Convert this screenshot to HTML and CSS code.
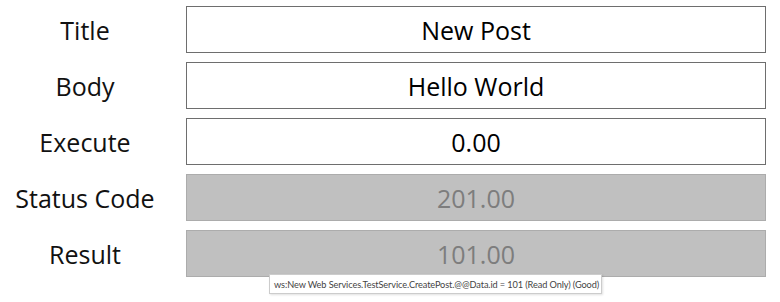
FILE: index.html
```html
<!DOCTYPE html>
<html lang="en">
<head>
  <meta charset="UTF-8">
  <title>Create Post</title>
  <link rel="stylesheet" href="styles.css">
</head>
<body>

  <div class="panel">
    <div class="row">
      <label class="row-label">Title</label>
      <div class="field">New Post</div>
    </div>

    <div class="row">
      <label class="row-label">Body</label>
      <div class="field">Hello World</div>
    </div>

    <div class="row">
      <label class="row-label">Execute</label>
      <div class="field">0.00</div>
    </div>

    <div class="row">
      <label class="row-label">Status Code</label>
      <div class="field readonly">201.00</div>
    </div>

    <div class="row">
      <label class="row-label">Result</label>
      <div class="field readonly">101.00</div>
      <div class="tooltip">ws:New Web Services.TestService.CreatePost.@@Data.id = 101 (Read Only) (Good)</div>
    </div>
  </div>

</body>
</html>
```

FILE: styles.css
```css
/* Global reset */
* {
  margin: 0;
  padding: 0;
  box-sizing: border-box;
  font-family: 'Open Sans', 'Noto Sans', sans-serif;
}

body {
  background-color: #ffffff;
  color: #111111;
  width: 780px;
  height: 302px;
  overflow: hidden;
}

.panel {
  display: flex;
  flex-direction: column;
  gap: 9px;
  padding: 6px 14px 0 0;
}

.row {
  display: grid;
  grid-template-columns: 170px 1fr;
  column-gap: 16px;
  align-items: center;
  height: 47px;
  position: relative;
}

.row-label {
  text-align: center;
  font-size: 25px;
  color: #111111;
}

.field {
  height: 47px;
  display: flex;
  align-items: center;
  justify-content: center;
  border: 1px solid #6e6e6e;
  background-color: #ffffff;
  color: #000000;
  font-size: 25px;
}

.field.readonly {
  background-color: #c0c0c0;
  border-color: #acacac;
  color: #7d7d7d;
}

/* hover tip over the result box */
.tooltip {
  position: absolute;
  left: 269px;
  top: 44px;
  height: 20px;
  width: 333px;
  padding: 0 4px;
  display: flex;
  align-items: center;
  background-color: #ffffff;
  border: 1px solid #cccccc;
  box-shadow: 1px 1px 2px rgba(0, 0, 0, 0.12);
  font-family: 'Lato', sans-serif;
  font-size: 9.2px;
  letter-spacing: -0.1px;
  color: #444444;
  white-space: nowrap;
}
```
